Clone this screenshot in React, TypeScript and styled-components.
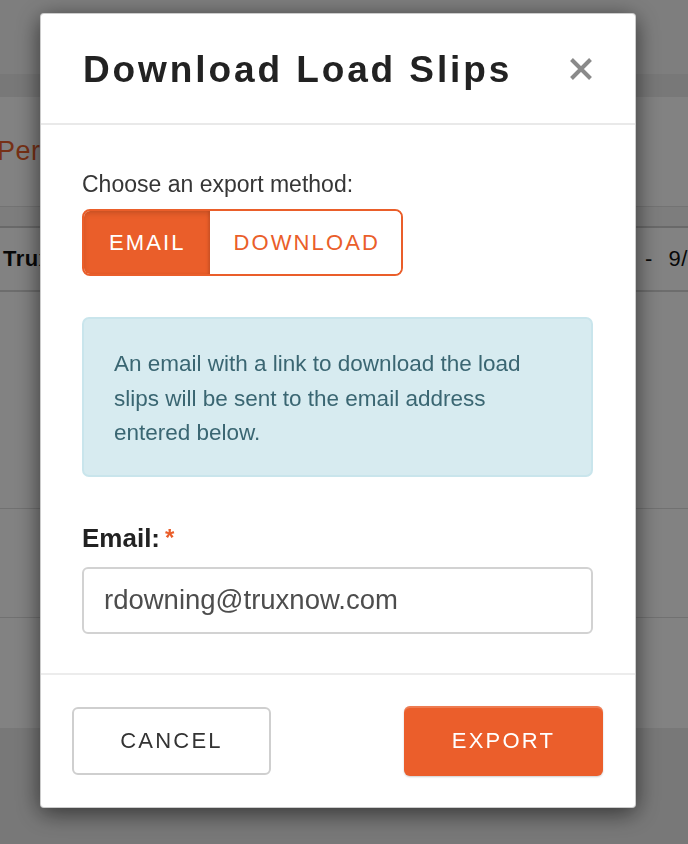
import React from "react";
import styled, { createGlobalStyle } from "styled-components";

const GlobalStyle = createGlobalStyle`
  html, body { margin: 0; padding: 0; }
  body {
    width: 688px;
    height: 844px;
    overflow: hidden;
    font-family: "Liberation Sans", Arial, Helvetica, sans-serif;
    background: #ffffff;
  }
  * { box-sizing: border-box; }
`;

const ORANGE = "#ea5e2a";

/* ---------- background page ---------- */
const Page = styled.div`
  width: 688px;
  height: 844px;
  overflow: hidden;
  display: flex;
  flex-direction: column;
  background: #ececec;
`;

const TopArea = styled.div`
  height: 74px;
  background: #f8f8f8;
`;

const Band = styled.div`
  height: 23px;
  background: #ececec;
`;

const Section = styled.div<{ $h: number; $border?: string; $bg?: string }>`
  height: ${(p) => p.$h}px;
  background: ${(p) => p.$bg ?? "#ffffff"};
  border-bottom: ${(p) => p.$border ?? "none"};
  display: flex;
  align-items: center;
  white-space: nowrap;
`;

const SectionTitle = styled.span`
  font-size: 27px;
  color: #e95f2b;
  margin-left: -3px;
  letter-spacing: 0.5px;
`;

const CellStrong = styled.span`
  font-size: 22px;
  font-weight: 700;
  color: #111;
  margin-left: 3px;
  letter-spacing: 0.5px;
`;

const CellDate = styled.span`
  margin-left: auto;
  width: 43px;
  font-size: 22px;
  color: #111;
  letter-spacing: 0.5px;
  word-spacing: 9px;
`;

/* ---------- modal ---------- */
const Overlay = styled.div`
  position: fixed;
  inset: 0;
  background: rgba(0, 0, 0, 0.49);
  padding: 13px 0 0 40px;
`;

const Modal = styled.div`
  width: 596px;
  background: #ffffff;
  border: 1px solid rgba(0, 0, 0, 0.2);
  border-radius: 4px;
  box-shadow: 0 5px 24px rgba(0, 0, 0, 0.6);
  display: flex;
  flex-direction: column;
`;

const Header = styled.div`
  display: flex;
  align-items: center;
  justify-content: space-between;
  padding: 34px 42px 31px 42px;
  border-bottom: 2px solid #e9e9e9;
`;

const Title = styled.h1`
  margin: 0;
  font-size: 37px;
  line-height: 44px;
  font-weight: 700;
  letter-spacing: 2.9px;
  color: #222222;
`;

const CloseButton = styled.button`
  border: none;
  background: none;
  padding: 0;
  margin-top: -3px;
  width: 24px;
  height: 24px;
  display: flex;
  align-items: center;
  justify-content: center;
  cursor: pointer;
`;

const Body = styled.div`
  padding: 45px 42px 39px 41px;
  display: flex;
  flex-direction: column;
  align-items: flex-start;
`;

const Prompt = styled.p`
  margin: 0;
  font-size: 23px;
  line-height: 28px;
  color: #363636;
`;

const Segmented = styled.div`
  margin-top: 11px;
  display: inline-flex;
  height: 67px;
  border: 2px solid ${ORANGE};
  border-radius: 8px;
  overflow: hidden;
`;

const SegButton = styled.button<{ $active?: boolean }>`
  border: none;
  margin: 0;
  padding: ${(p) => (p.$active ? "0 24px 0 25px" : "0 21px 0 24px")};
  height: 100%;
  font-family: "Liberation Sans", Arial, Helvetica, sans-serif;
  font-size: 22px;
  letter-spacing: 2.1px;
  cursor: pointer;
  background: ${(p) => (p.$active ? ORANGE : "#ffffff")};
  color: ${(p) => (p.$active ? "#ffffff" : ORANGE)};
  box-shadow: ${(p) =>
    p.$active ? "inset 0 3px 5px rgba(0,0,0,0.12), inset -2px 0 2px rgba(0,0,0,0.08)" : "none"};
`;

const InfoBox = styled.div`
  margin-top: 41px;
  width: 100%;
  background: #d7ebf0;
  border: 2px solid #c9e5ec;
  border-radius: 7px;
  padding: 28px 30px 24px 30px;
  font-size: 22.5px;
  line-height: 34.5px;
  color: #3a6672;
`;

const Label = styled.label`
  margin-top: 46px;
  display: flex;
  align-items: flex-start;
  gap: 5px;
  font-size: 26px;
  line-height: 30px;
  font-weight: 700;
  color: #222222;
`;

const Required = styled.span`
  color: ${ORANGE};
  font-size: 24px;
  line-height: 24px;
  margin-top: 3px;
`;

const Input = styled.input`
  margin-top: 14px;
  width: 100%;
  height: 67px;
  border: 2px solid #d2d2d2;
  border-radius: 6px;
  padding: 0 20px;
  font-family: "Liberation Sans", Arial, Helvetica, sans-serif;
  font-size: 27.5px;
  color: #4d4d4d;
  outline: none;
`;

const Footer = styled.div`
  border-top: 2px solid #ececec;
  padding: 31px 32px 31px 31px;
  display: flex;
  align-items: center;
  justify-content: space-between;
`;

const FooterButton = styled.button<{ $primary?: boolean }>`
  width: 199px;
  height: ${(p) => (p.$primary ? 70 : 68)}px;
  border-radius: 6px;
  font-family: "Liberation Sans", Arial, Helvetica, sans-serif;
  font-size: 22px;
  letter-spacing: 2.2px;
  cursor: pointer;
  border: ${(p) => (p.$primary ? "none" : "2px solid #cfcfcf")};
  background: ${(p) => (p.$primary ? "#eb5e2b" : "#ffffff")};
  color: ${(p) => (p.$primary ? "#ffffff" : "#333333")};
  box-shadow: ${(p) =>
    p.$primary ? "inset 0 2px 0 rgba(255,255,255,0.18), 0 1px 2px rgba(0,0,0,0.2)" : "none"};
`;

const CloseIcon = () => (
  <svg width="24" height="24" viewBox="0 0 24 24" aria-hidden="true">
    <path
      d="M2.5 2.5 L21.5 21.5 M21.5 2.5 L2.5 21.5"
      stroke="#8a8a8a"
      strokeWidth="4"
      strokeLinecap="butt"
      fill="none"
    />
  </svg>
);

export default function App() {
  return (
    <>
      <GlobalStyle />
      <Page>
        <TopArea />
        <Band />
        <Section $h={110} $border="1px solid #e2e2e2">
          <SectionTitle>Performance</SectionTitle>
        </Section>
        <Section $h={21} $bg="#f6f6f6" $border="2px solid #cfcfcf" />
        <Section $h={64} $border="2px solid #d6d6d6">
          <CellStrong>Truxnow Logistics</CellStrong>
          <CellDate>- 9/14/2023</CellDate>
        </Section>
        <Section $h={217} $border="1px solid #dedede" />
        <Section $h={109} $border="1px solid #dedede" />
        <Section $h={110} />
      </Page>
      <Overlay>
        <Modal role="dialog" aria-labelledby="dl-title">
          <Header>
            <Title id="dl-title">Download Load Slips</Title>
            <CloseButton aria-label="Close">
              <CloseIcon />
            </CloseButton>
          </Header>
          <Body>
            <Prompt>Choose an export method:</Prompt>
            <Segmented>
              <SegButton $active>EMAIL</SegButton>
              <SegButton>DOWNLOAD</SegButton>
            </Segmented>
            <InfoBox>
              An email with a link to download the load slips will be sent to
              the email address entered below.
            </InfoBox>
            <Label htmlFor="email">
              Email:<Required>*</Required>
            </Label>
            <Input id="email" type="email" defaultValue="rdowning@truxnow.com" />
          </Body>
          <Footer>
            <FooterButton>CANCEL</FooterButton>
            <FooterButton $primary>EXPORT</FooterButton>
          </Footer>
        </Modal>
      </Overlay>
    </>
  );
}
